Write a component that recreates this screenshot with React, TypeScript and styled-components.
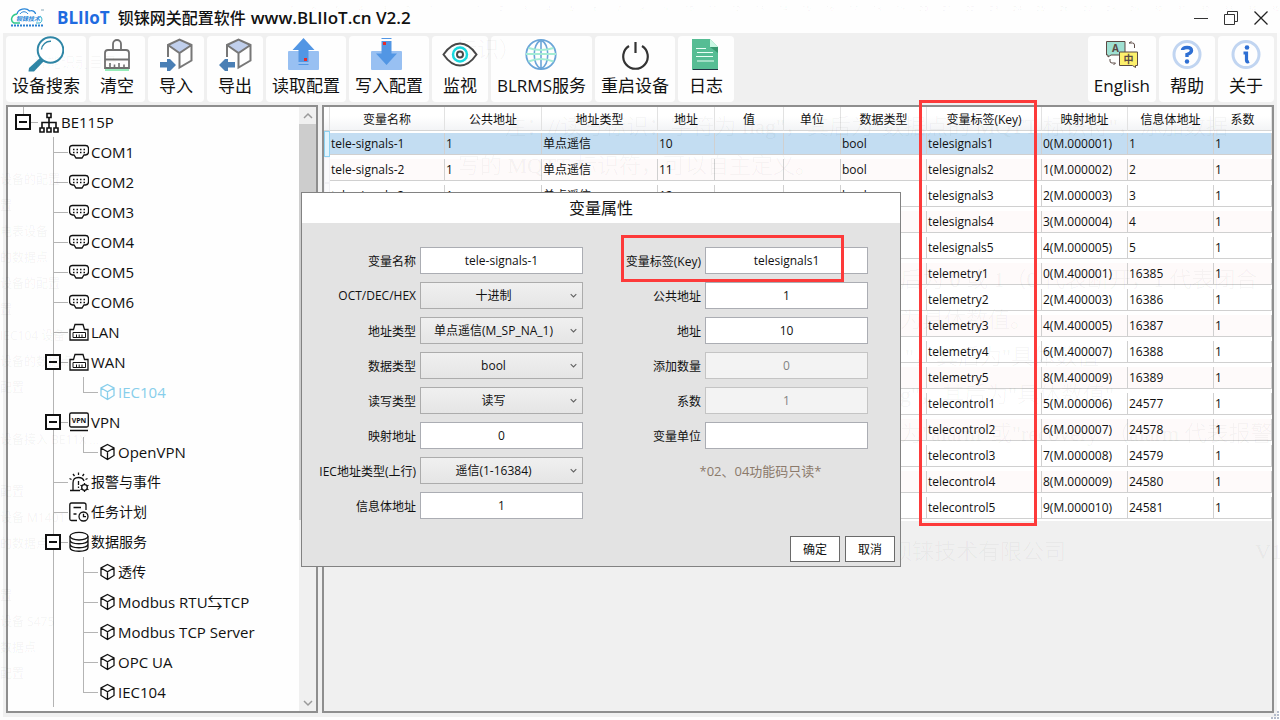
import React from "react";
import styled, { createGlobalStyle, css } from "styled-components";

const GlobalStyle = createGlobalStyle`
  *, *::before, *::after { box-sizing: border-box; }
  html, body { margin: 0; padding: 0; }
  body {
    background: #fdfdfd;
    color: #111;
    font-family: "Open Sans", "Noto Sans CJK SC", sans-serif;
    font-size: 12px;
  }
  button, input, select { font: inherit; color: inherit; margin: 0; }
  svg { display: block; flex: none; }
`;

/* ---------- window frame ---------- */

const Window = styled.div`
  position: relative;
  display: flex;
  flex-direction: column;
  height: 100vh;
  min-height: 600px;
  overflow: hidden;
`;

const TitleBar = styled.header`
  display: flex;
  align-items: center;
  height: 33px;
  flex: none;
  padding: 3px 11px 0 10px;
  background: #fefefe;
`;

const AppTitle = styled.h1`
  flex: 1;
  display: flex;
  align-items: center;
  gap: 8px;
  margin: 0 0 0 11px;
  font-size: 16px;
  line-height: 24px;
  font-weight: 500;
  color: #111;
  white-space: nowrap;
`;

const Brand = styled.span`
  color: #1f6be0;
  font-size: 17px;
  font-weight: 700;
`;

const Product = styled.span`
  display: flex;
  align-items: center;
  gap: 5px;
`;

const Version = styled.span`
  font-size: 17px;
  font-weight: 600;
`;

const WindowButtons = styled.div`
  display: flex;
  gap: 14px;
`;

const WindowButton = styled.button`
  width: 16px;
  height: 16px;
  padding: 0;
  border: 0;
  background: none;
`;

const Client = styled.div`
  flex: 1;
  min-height: 0;
  display: flex;
  flex-direction: column;
  gap: 3px;
  margin: 0 3px 3px;
  padding: 3px 3px 4px;
  background: #f0f0f0;
`;

/* ---------- toolbar ---------- */

const Toolbar = styled.nav`
  display: flex;
  gap: 3px;
  height: 66px;
  flex: none;
`;

const ToolSpacer = styled.div`
  flex: 1;
`;

const ToolButton = styled.button`
  display: flex;
  flex-direction: column;
  align-items: center;
  min-width: 56px;
  padding: 0 6px;
  border: 0;
  border-radius: 4px;
  background: #fefefe;
  font-size: 17px;
  line-height: 28px;
  white-space: nowrap;
`;

/* ---------- panels ---------- */

const Workspace = styled.main`
  flex: 1;
  min-height: 0;
  display: flex;
  gap: 4px;
`;

const TreePanel = styled.aside`
  width: 312px;
  flex: none;
  display: flex;
  overflow: hidden;
  border: 2px solid #8e8e8e;
  background: #fefefe;
`;

const TreeList = styled.ul`
  flex: 1;
  margin: 0;
  padding: 0;
  list-style: none;
`;

const TreeRow = styled.li<{ $active?: boolean; $latin?: boolean }>`
  display: flex;
  align-items: center;
  height: 30px;
  color: ${(p) => (p.$active ? "#87ceeb" : "#111")};
  font-size: ${(p) => (p.$latin ? 15 : 14)}px;
  line-height: 20px;
  white-space: nowrap;
`;

type Guide = "none" | "pass" | "tee" | "end" | "root" | "box";

const line = "#b4b4b4";

const guideLines = {
  none: css``,
  pass: css`
    background: linear-gradient(${line}, ${line}) 15px 0 / 1px 100% no-repeat;
  `,
  tee: css`
    background:
      linear-gradient(${line}, ${line}) 15px 0 / 1px 100% no-repeat,
      linear-gradient(${line}, ${line}) 15px 15px / 15px 1px no-repeat;
  `,
  box: css`
    background:
      linear-gradient(${line}, ${line}) 15px 0 / 1px 100% no-repeat,
      linear-gradient(${line}, ${line}) 15px 15px / 15px 1px no-repeat;
  `,
  end: css`
    background:
      linear-gradient(${line}, ${line}) 15px 0 / 1px 15px no-repeat,
      linear-gradient(${line}, ${line}) 15px 15px / 15px 1px no-repeat;
  `,
  root: css`
    background:
      linear-gradient(${line}, ${line}) 15px 0 / 1px 15px no-repeat,
      linear-gradient(${line}, ${line}) 15px 15px / 15px 1px no-repeat;
  `,
};

const GuideCell = styled.span<{ $kind: Guide }>`
  display: flex;
  align-items: center;
  justify-content: center;
  width: 30px;
  height: 30px;
  flex: none;
  ${(p) => guideLines[p.$kind]}
`;

const Expander = styled.button`
  display: grid;
  place-items: center;
  width: 16px;
  height: 16px;
  padding: 0;
  border: 2px solid #111;
  background: #fff;
  &::before {
    content: "";
    width: 8px;
    height: 2px;
    background: #111;
  }
`;

const NodeIcon = styled.span`
  margin: 0 2px 0 1px;
`;

const ScrollTrack = styled.div`
  display: flex;
  flex-direction: column;
  width: 17px;
  flex: none;
  background: #f0f0f0;
`;

const ScrollArrow = styled.button`
  display: grid;
  place-items: center;
  height: 17px;
  padding: 0;
  border: 0;
  background: #f0f0f0;
  color: #9a9a9a;
`;

const ScrollThumb = styled.div`
  flex: 396;
  background: #cdcdcd;
`;

const ScrollRest = styled.div`
  flex: 174;
`;

const GridPanel = styled.section`
  flex: 1;
  min-width: 0;
  overflow: hidden;
  border: 2px solid #8e8e8e;
  background: #f0f0f0;
`;

/* ---------- data table ---------- */

const Table = styled.table`
  width: 100%;
  table-layout: fixed;
  border-collapse: separate;
  border-spacing: 0;
  background: #fff;
`;

const HeadCell = styled.th`
  height: 24px;
  padding: 2px 0 0;
  border-right: 1px solid #e2e2e2;
  border-bottom: 1px solid #d5d5d5;
  background: linear-gradient(#fff 40%, #f3f4f6);
  font-weight: 400;
  line-height: 21px;
  white-space: nowrap;
`;

const Cell = styled.td`
  height: 26px;
  padding: 2px 0;
`;

const CellBox = styled.div<{ $tone: "selected" | "odd" | "even" }>`
  height: 22px;
  padding-left: 1px;
  overflow: hidden;
  border-right: 1px solid #d0d0d0;
  border-bottom: 1px solid #d0d0d0;
  background: ${(p) =>
    p.$tone === "selected" ? "#c3ddf2" : p.$tone === "even" ? "#fefafa" : "#fff"};
  line-height: 21px;
  white-space: nowrap;
`;

const RowMark = styled.td<{ $selected?: boolean }>`
  padding: 0;
  border: 1px solid ${(p) => (p.$selected ? "#8fd3f2" : "#f0f0f4")};
  background: ${(p) => (p.$selected ? "#e2f4fd" : "#fafafc")};
`;

/* ---------- dialog ---------- */

const Dialog = styled.section`
  position: absolute;
  left: 301px;
  top: 192px;
  width: 600px;
  border: 1px solid #828282;
  background: #e3e3e3;
`;

const DialogTitle = styled.h2`
  margin: 0;
  height: 30px;
  background: #fff;
  font-size: 16px;
  line-height: 30px;
  font-weight: 400;
  text-align: center;
`;

const Form = styled.form`
  display: flex;
  flex-direction: column;
  gap: 17px;
  padding: 24px 5px 4px 0;
`;

const FieldGrid = styled.div`
  display: grid;
  grid-template-columns: 114px 163px 114px 163px;
  grid-auto-rows: 27px;
  gap: 8px 4px;
  align-items: center;
`;

const Label = styled.label`
  text-align: right;
  white-space: nowrap;
`;

const TextField = styled.input`
  width: 100%;
  height: 27px;
  padding: 0 4px;
  border: 1px solid #abadb3;
  border-radius: 0;
  background: #fff;
  text-align: center;
  &:disabled {
    border-color: #c4c4c4;
    background: #f3f3f3;
    color: #838383;
  }
`;

const SelectBox = styled.span`
  display: grid;
  grid-template-columns: 1fr 20px;
  align-items: center;
  justify-items: center;
  > * { grid-row: 1; }
  > svg { grid-column: 2; pointer-events: none; z-index: 1; color: #606060; }
`;

const Select = styled.select`
  grid-column: 1 / 3;
  width: 100%;
  height: 27px;
  padding: 0 20px 0 4px;
  border: 1px solid #acacac;
  border-radius: 0;
  appearance: none;
  background: linear-gradient(#f0f0f0, #e5e5e5);
  text-align: center;
  text-align-last: center;
`;

const Note = styled.p`
  grid-column: 3 / 5;
  margin: 0 0 0 66px;
  color: #8b7a6b;
  font-size: 13px;
  text-align: center;
`;

const DialogActions = styled.div`
  display: flex;
  justify-content: flex-end;
  gap: 5px;
`;

const DialogButton = styled.button`
  width: 50px;
  height: 26px;
  padding: 0;
  border: 1px solid #6a6a6a;
  background: #fff;
`;

/* ---------- overlays ---------- */

const Highlight = styled.div<{ $x: number; $y: number; $w: number; $h: number }>`
  position: absolute;
  left: ${(p) => p.$x}px;
  top: ${(p) => p.$y}px;
  width: ${(p) => p.$w}px;
  height: ${(p) => p.$h}px;
  border: 3px solid #fd3a3a;
  pointer-events: none;
`;

const GhostLayer = styled.div`
  position: absolute;
  inset: 0;
  overflow: hidden;
  pointer-events: none;
  color: rgba(0, 0, 0, 0.05);
  white-space: nowrap;
`;

const GhostRuler = styled.div`
  position: absolute;
  left: 279px;
  top: 0;
  width: 1008px;
  display: grid;
  grid-template-columns: repeat(43, 1fr);
  font-size: 8px;
  line-height: 15px;
  text-align: center;
`;

const GhostOutline = styled.div`
  position: absolute;
  left: 0;
  top: 167px;
  line-height: 26px;
`;

const GhostRow = styled.div`
  height: 26px;
`;

const GhostText = styled.div<{ $x: number; $y: number; $size?: number }>`
  position: absolute;
  left: ${(p) => p.$x}px;
  top: ${(p) => p.$y}px;
  font-family: "Liberation Serif", "Noto Sans CJK SC", serif;
  font-size: ${(p) => p.$size ?? 22}px;
  font-weight: 300;
  line-height: 28px;
`;

const Grip = styled.svg`
  position: absolute;
  right: 0;
  bottom: 0;
`;

/* ---------- icons ---------- */

const ToolSvg = ({ children }: { children: React.ReactNode }) => (
  <svg width="36" height="36" viewBox="0 0 36 36" fill="none" aria-hidden="true">
    {children}
  </svg>
);

const SearchIcon = () => (
  <ToolSvg>
    <path d="M12.5 21.5 L16 25 L6 35.5 L0.5 35.5 L1 32 Z" fill="#2f86a6" />
    <circle cx="22.5" cy="14" r="12.8" fill="#fff" stroke="#2f86a6" strokeWidth="2" />
    <path d="M13.5 13.5 A9 9 0 0 1 23 5.2" stroke="#2f86a6" strokeWidth="1.4" />
  </ToolSvg>
);

const ClearIcon = () => (
  <ToolSvg>
    <path d="M14 14 V8 a4 4 0 0 1 8 0 V14" stroke="#707070" strokeWidth="1.8" />
    <path d="M6 32 V17 a3 3 0 0 1 3-3 H27 a3 3 0 0 1 3 3 V32 Z M6 23.500 H30" stroke="#707070" strokeWidth="1.8" />
    <path d="M11 27 V32 M15.500 28.500 V32 M20 27 V32 M25 28.500 V32" stroke="#707070" strokeWidth="1.6" />
    <path d="M6 34 H30" stroke="#4fe08a" strokeWidth="1.2" />
  </ToolSvg>
);

const Cube = () => (
  <>
    <path d="M21.500 3.500 L33.500 9 L21.500 17 L10 9 Z" fill="#c0cfec" />
    <path d="M10 21 V9 L21.500 3.500 L33.500 9 V24.500 L21.500 31.500 V17 M10 9 L21.500 17 L33.500 9" stroke="#777" strokeWidth="2" />
  </>
);

const ImportIcon = () => (
  <ToolSvg>
    <Cube />
    <path d="M2 26 H9 V23 H12 L18 29 L12 35 H9 V31.500 H2 Z" fill="#4a7fb5" />
  </ToolSvg>
);

const ExportIcon = () => (
  <ToolSvg>
    <Cube />
    <path d="M18 26 H11 V23 H8 L2 29 L8 35 H11 V31.500 H18 Z" fill="#4a7fb5" />
  </ToolSvg>
);

const ReadIcon = () => (
  <ToolSvg>
    <rect x="0" y="15" width="31" height="19" rx="1" fill="#98c0f2" />
    <path d="M15.500 2 L26.500 14 H20.500 V26 H10.500 V14 H4.500 Z" fill="#5296e4" />
    <path d="M10.500 28.500 H20.500" stroke="#5296e4" />
    <rect x="16" y="22" width="3" height="3" fill="#e52b2b" />
  </ToolSvg>
);

const WriteIcon = () => (
  <ToolSvg>
    <rect x="0" y="15" width="31" height="19" rx="1" fill="#98c0f2" />
    <path d="M10.500 5 H20.500 V17.500 H26 L15.500 29 L5 17.500 H10.500 Z" fill="#5296e4" />
    <path d="M10.500 2.500 H20.500" stroke="#5296e4" />
    <rect x="12" y="6" width="3" height="3" fill="#e52b2b" />
  </ToolSvg>
);

const EyeIcon = () => (
  <ToolSvg>
    <path d="M1.500 18.500 Q9 7.500 18 7.500 T34.500 18.500 Q27 29.500 18 29.500 T1.500 18.500 Z" stroke="#484848" strokeWidth="2" />
    <circle cx="18" cy="18.500" r="7" stroke="#19d9df" strokeWidth="2.500" />
    <circle cx="18" cy="18.500" r="3" stroke="#484848" strokeWidth="2" />
  </ToolSvg>
);

const GlobeIcon = () => (
  <ToolSvg>
    <circle cx="18" cy="18.500" r="14.700" stroke="#6ba5d8" strokeWidth="1.800" />
    <path d="M18 4 V33 M18 4 C9 9 9 28 18 33 M18 4 C27 9 27 28 18 33" stroke="#6ba5d8" strokeWidth="1.600" />
    <path d="M5.500 12 Q18 16 30.500 12 M3 18 H33 M5.500 25.500 Q18 20.500 30.500 25.500" stroke="#a4ecd4" strokeWidth="2.200" />
  </ToolSvg>
);

const PowerIcon = () => (
  <ToolSvg>
    <path d="M12 10 A12.300 12.300 0 1 0 25 10 M18.500 6 V17" stroke="#333" strokeWidth="2.200" />
  </ToolSvg>
);

const LogIcon = () => (
  <ToolSvg>
    <path d="M4 3 H22 L30 11 V34 H4 Z" fill="#56bd94" />
    <path d="M22 3 L30 11 H22 Z" fill="#c9f7e3" />
    <path d="M22 11 H30 V17 Z" fill="#36986f" />
    <path d="M8 12.500 H18 M9 16.500 H25 M8 20.500 H25 M9 25 H26" stroke="#eafff6" strokeWidth="1.200" />
    <path d="M5 33.500 H30" stroke="#234" />
  </ToolSvg>
);

const LanguageIcon = () => (
  <ToolSvg>
    <path d="M2.500 5.500 H21 V19 H7 L4 21 V19 H2.500 Z" fill="#9fe0d2" stroke="#5b4a45" />
    <path d="M15.500 16 H33.500 V29.500 H31.500 V31.500 L28.500 29.500 H15.500 Z" fill="#fdf06c" stroke="#5b4a45" />
    <path d="M25 7 H28.500 a2 2 0 0 1 2 2 V12 M25 7 L27.500 5.500 M6 23 V25 a2 2 0 0 0 2 2 H11.500 L9.500 29" stroke="#5b4a45" />
    <text x="11.500" y="16" textAnchor="middle" fontSize="10" fontWeight="700" fill="#5b4a45">A</text>
    <text x="24.500" y="26.500" textAnchor="middle" fontSize="10" fontWeight="700" fill="#5b4a45">中</text>
  </ToolSvg>
);

const HelpIcon = () => (
  <ToolSvg>
    <circle cx="18" cy="18.500" r="13" stroke="#c1d5f1" strokeWidth="3" />
    <path d="M13.500 14 Q13.500 11.500 18 11.500 Q22.500 11.500 22.500 14.500 Q22.500 17 18 18.500 V21" stroke="#2e6fd3" strokeWidth="3.400" />
    <circle cx="18" cy="25.500" r="2.200" fill="#2e6fd3" />
  </ToolSvg>
);

const AboutIcon = () => (
  <ToolSvg>
    <circle cx="18" cy="18.500" r="13" stroke="#c1d5f1" strokeWidth="3" />
    <circle cx="19" cy="11.500" r="2.300" fill="#2e6fd3" />
    <path d="M15.500 17 H18.500 V24.500 Q18.500 26.500 21 25.500" stroke="#2e6fd3" strokeWidth="3.200" />
  </ToolSvg>
);

const NodeSvg = ({ w = 20, children }: { w?: number; children: React.ReactNode }) => (
  <svg
    width={w}
    height="22"
    viewBox={`0 0 ${w} 22`}
    fill="none"
    stroke="currentColor"
    strokeWidth="1.300"
    aria-hidden="true"
  >
    {children}
  </svg>
);

const nodeIcons = {
  site: (
    <NodeSvg>
      <g strokeWidth="1.600">
        <path d="M8 2.500 h4 v4 h-4 Z M1 17 h4 v4 h-4 Z M8 17 h4 v4 h-4 Z M15 17 h4 v4 h-4 Z M10 6.500 V17 M3 17 V11.500 H17 V17" />
      </g>
    </NodeSvg>
  ),
  com: (
    <NodeSvg>
      <path d="M3.500 4.500 H16.500 Q19.500 4.500 19.500 7.500 V11 Q19.500 13.500 16.500 14 H15 L13 17 H7 L5 14 H3.500 Q0.600 13.500 0.600 11 V7.500 Q0.600 4.500 3.500 4.500 Z" />
      <path d="M4 8.500 H17 M4 11.500 H17" strokeWidth="1.500" strokeDasharray="1.500 2" />
    </NodeSvg>
  ),
  lan: (
    <NodeSvg>
      <path d="M1 19 V8.500 H4.500 L6 3.500 H14 L15.500 8.500 H19 V19 Z" />
      <path d="M4 16.500 V11.500 H16.500 V16.500 Z M7.500 13.500 V16.500 M10.200 13.500 V16.500 M13 13.500 V16.500" strokeWidth="1" />
    </NodeSvg>
  ),
  vpn: (
    <NodeSvg>
      <rect x="0.700" y="2" width="18.600" height="14" rx="1.500" />
      <path d="M1 19.500 H19" strokeWidth="1.500" />
      <text x="10" y="11.500" textAnchor="middle" fontSize="7" fontWeight="700" fill="currentColor" stroke="none">VPN</text>
    </NodeSvg>
  ),
  alarm: (
    <NodeSvg>
      <path d="M4 19 V12 Q4 6.500 9.500 6.500 Q14 6.500 15 10 M1 19.500 H11 M9.500 10 V14 M9.500 15.500 V17 M9.500 1.500 V4 M4 3 L5.500 5 M15 3 L13.500 5 M0.500 7.500 L2.500 8.500 M18.500 7.500 L16.500 8.500" />
      <circle cx="15.500" cy="16.500" r="2.800" />
      <path d="M15.500 12 V13.500 M15.500 19.500 V21 M11.500 14.200 L13 15 M18 18 L19.500 18.800 M19.500 14.200 L18 15 M11.500 18.800 L13 18" />
    </NodeSvg>
  ),
  task: (
    <NodeSvg>
      <path d="M17 9 V4 Q17 2 15 2 H2.500 Q0.800 2 0.800 4 V18 Q0.800 19.500 2.500 19.500 H8 M4.500 6.500 H12 M4.500 13 H7.500" />
      <circle cx="14.500" cy="15.500" r="4.500" />
      <path d="M14.500 12.800 V15.700 H17" />
    </NodeSvg>
  ),
  data: (
    <NodeSvg>
      <ellipse cx="10" cy="5.200" rx="9" ry="3.800" />
      <path d="M1 5.200 V16.500 C1 21.500 19 21.500 19 16.500 V5.200 M1 9 C1 14 19 14 19 9 M1 13 C1 18 19 18 19 13" />
    </NodeSvg>
  ),
  cube: (
    <NodeSvg w={17}>
      <path d="M8.500 3.500 L15 7 V14.500 L8.500 18.500 L2 14.500 V7 Z M2 7 L8.500 10.800 L15 7 M8.500 10.800 V18.500" />
    </NodeSvg>
  ),
};

const Logo = () => (
  <svg width="36" height="20" viewBox="0 0 36 20" fill="none" aria-hidden="true">
    <path d="M7 6 C8 1 16 -1 19.500 3 C23 2 25.500 4 25.500 6" stroke="#2a86d8" strokeWidth="1.300" />
    <path d="M10 6 C12 3 16 3 18 6" stroke="#2a86d8" />
    <path d="M7 6 C1 7 0 13 4 15 H10" stroke="#2fc88c" strokeWidth="1.500" />
    <path d="M26 15 H30 C33 13 32 9 30 8" stroke="#2fb0c8" strokeWidth="1" />
    <text x="6" y="12.500" fontSize="6" fontStyle="italic" fontWeight="700" fill="#2a86d8">钡铼技术</text>
    <path d="M1 17.500 H33" stroke="#2a7fd0" strokeWidth="1.800" strokeDasharray="2 1" />
    <path d="M31 2 H34" stroke="#8ab" />
  </svg>
);

const Chevron = ({ up, size = 10 }: { up?: boolean; size?: number }) => (
  <svg width={size} height={size} viewBox="0 0 10 10" fill="none" stroke="currentColor" strokeWidth="1.500" aria-hidden="true">
    <path d={up ? "M1 7 L5 3 L9 7" : "M1 3 L5 7 L9 3"} />
  </svg>
);

/* ---------- data ---------- */

const mainTools = [
  { label: "设备搜索", icon: <SearchIcon /> },
  { label: "清空", icon: <ClearIcon /> },
  { label: "导入", icon: <ImportIcon /> },
  { label: "导出", icon: <ExportIcon /> },
  { label: "读取配置", icon: <ReadIcon /> },
  { label: "写入配置", icon: <WriteIcon /> },
  { label: "监视", icon: <EyeIcon /> },
  { label: "BLRMS服务", icon: <GlobeIcon /> },
  { label: "重启设备", icon: <PowerIcon /> },
  { label: "日志", icon: <LogIcon /> },
];

const sideTools = [
  { label: "English", icon: <LanguageIcon /> },
  { label: "帮助", icon: <HelpIcon /> },
  { label: "关于", icon: <AboutIcon /> },
];

type TreeNode = {
  label: string;
  icon: keyof typeof nodeIcons;
  guides: Guide[];
  active?: boolean;
};

const port = (label: string): TreeNode => ({ label, icon: "com", guides: ["none", "tee"] });
const service = (label: string, last?: boolean): TreeNode => ({
  label,
  icon: "cube",
  guides: ["none", "pass", last ? "end" : "tee"],
});

const tree: TreeNode[] = [
  { label: "BE115P", icon: "site", guides: ["root"] },
  port("COM1"),
  port("COM2"),
  port("COM3"),
  port("COM4"),
  port("COM5"),
  port("COM6"),
  { label: "LAN", icon: "lan", guides: ["none", "tee"] },
  { label: "WAN", icon: "lan", guides: ["none", "box"] },
  { ...service("IEC104", true), active: true },
  { label: "VPN", icon: "vpn", guides: ["none", "box"] },
  service("OpenVPN", true),
  { label: "报警与事件", icon: "alarm", guides: ["none", "tee"] },
  { label: "任务计划", icon: "task", guides: ["none", "tee"] },
  { label: "数据服务", icon: "data", guides: ["none", "box"] },
  service("透传"),
  service("Modbus RTU⇆TCP"),
  service("Modbus TCP Server"),
  service("OPC UA"),
  service("IEC104", true),
];

const isLatin = (text: string) => /^[A-Z]/.test(text);

const columns: { title: string; width?: number }[] = [
  { title: "变量名称", width: 115 },
  { title: "公共地址", width: 97 },
  { title: "地址类型", width: 116 },
  { title: "地址", width: 57 },
  { title: "值", width: 69 },
  { title: "单位", width: 57 },
  { title: "数据类型", width: 86 },
  { title: "变量标签(Key)", width: 115 },
  { title: "映射地址", width: 86 },
  { title: "信息体地址", width: 86 },
  { title: "系数" },
];

const signal = (n: number, mapped: string) => [
  `tele-signals-${n}`, "1", "单点遥信", String(9 + n), "", "", "bool", `telesignals${n}`, mapped, String(n), "1",
];
const metric = (n: number, mapped: string) => [
  `telemetry-${n}`, "1", "短浮点数", String(n), "", "", "float", `telemetry${n}`, mapped, String(16384 + n), "1",
];
const control = (n: number, mapped: string) => [
  `telecontrol-${n}`, "1", "单点遥控", String(n), "", "", "bool", `telecontrol${n}`, mapped, String(24576 + n), "1",
];

const rows = [
  signal(1, "0(M.000001)"),
  signal(2, "1(M.000002)"),
  signal(3, "2(M.000003)"),
  signal(4, "3(M.000004)"),
  signal(5, "4(M.000005)"),
  metric(1, "0(M.400001)"),
  metric(2, "2(M.400003)"),
  metric(3, "4(M.400005)"),
  metric(4, "6(M.400007)"),
  metric(5, "8(M.400009)"),
  control(1, "5(M.000006)"),
  control(2, "6(M.000007)"),
  control(3, "7(M.000008)"),
  control(4, "8(M.000009)"),
  control(5, "9(M.000010)"),
];

type Field = { id: string; label: string; value: string; kind?: "select" | "disabled" };

const formRows: [Field, Field?][] = [
  [{ id: "name", label: "变量名称", value: "tele-signals-1" }, { id: "key", label: "变量标签(Key)", value: "telesignals1" }],
  [{ id: "radix", label: "OCT/DEC/HEX", value: "十进制", kind: "select" }, { id: "common", label: "公共地址", value: "1" }],
  [{ id: "addrType", label: "地址类型", value: "单点遥信(M_SP_NA_1)", kind: "select" }, { id: "addr", label: "地址", value: "10" }],
  [{ id: "dataType", label: "数据类型", value: "bool", kind: "select" }, { id: "count", label: "添加数量", value: "0", kind: "disabled" }],
  [{ id: "access", label: "读写类型", value: "读写", kind: "select" }, { id: "factor", label: "系数", value: "1", kind: "disabled" }],
  [{ id: "mapped", label: "映射地址", value: "0" }, { id: "unit", label: "变量单位", value: "" }],
  [{ id: "iecType", label: "IEC地址类型(上行)", value: "遥信(1-16384)", kind: "select" }],
  [{ id: "info", label: "信息体地址", value: "1" }],
];

const rulerMarks = [
  ...[7, 6, 5, 4, 3, 2, 1].map(String),
  "",
  ...Array.from({ length: 35 }, (_, i) => String(i + 1)),
];

const outlineLines = [
  "设备的配置", "置", "电表设备", "的数据点", "设备的配置", "置", "IEC104 设备", "设备的数据点", "配置", "",
  "设备接入 BE11X ...", "", "配置", "设备 M1401", "的数据点", "", "置", "设备 S475", "数据点", "配置",
];

/* ---------- parts ---------- */

const FieldPair = ({ field }: { field: Field }) => (
  <>
    <Label htmlFor={field.id}>{field.label}</Label>
    {field.kind === "select" ? (
      <SelectBox>
        <Select id={field.id} defaultValue={field.value}>
          <option>{field.value}</option>
        </Select>
        <Chevron size={7} />
      </SelectBox>
    ) : (
      <TextField id={field.id} defaultValue={field.value} disabled={field.kind === "disabled"} />
    )}
  </>
);

const Tool = ({ label, icon }: { label: string; icon: React.ReactNode }) => (
  <ToolButton type="button">
    {icon}
    {label}
  </ToolButton>
);

const DeviceTree = () => (
  <TreePanel>
    <TreeList>
      {tree.map((node, i) => (
        <TreeRow key={i} $active={node.active} $latin={isLatin(node.label)}>
          {node.guides.map((kind, j) => (
            <GuideCell key={j} $kind={kind}>
              {(kind === "box" || kind === "root") && (
                <Expander type="button" aria-label={`折叠 ${node.label}`} aria-expanded="true" />
              )}
            </GuideCell>
          ))}
          <NodeIcon>{nodeIcons[node.icon]}</NodeIcon>
          {node.label}
        </TreeRow>
      ))}
    </TreeList>
    <ScrollTrack>
      <ScrollArrow type="button" aria-label="向上滚动"><Chevron up /></ScrollArrow>
      <ScrollThumb />
      <ScrollRest />
      <ScrollArrow type="button" aria-label="向下滚动"><Chevron /></ScrollArrow>
    </ScrollTrack>
  </TreePanel>
);

const PointTable = () => (
  <GridPanel>
    <Table>
      <colgroup>
        <col style={{ width: 6 }} />
        {columns.map((c) => (
          <col key={c.title} style={{ width: c.width }} />
        ))}
      </colgroup>
      <thead>
        <tr>
          <HeadCell aria-hidden="true" />
          {columns.map((c) => (
            <HeadCell key={c.title} scope="col">{c.title}</HeadCell>
          ))}
        </tr>
      </thead>
      <tbody>
        {rows.map((row, i) => (
          <tr key={row[0]}>
            <RowMark $selected={i === 0} />
            {row.map((value, j) => (
              <Cell key={j}>
                <CellBox $tone={i === 0 ? "selected" : i % 2 ? "even" : "odd"}>{value}</CellBox>
              </Cell>
            ))}
          </tr>
        ))}
      </tbody>
    </Table>
  </GridPanel>
);

const PropertyDialog = () => (
  <Dialog role="dialog" aria-labelledby="dialog-title">
    <DialogTitle id="dialog-title">变量属性</DialogTitle>
    <Form onSubmit={(e) => e.preventDefault()}>
      <FieldGrid>
        {formRows.map(([left, right]) => (
          <React.Fragment key={left.id}>
            <FieldPair field={left} />
            {right && <FieldPair field={right} />}
            {left.id === "iecType" && <Note>*02、04功能码只读*</Note>}
          </React.Fragment>
        ))}
      </FieldGrid>
      <DialogActions>
        <DialogButton type="submit">确定</DialogButton>
        <DialogButton type="button">取消</DialogButton>
      </DialogActions>
    </Form>
  </Dialog>
);

const Ghosts = () => (
  <GhostLayer aria-hidden="true">
    <GhostRuler>
      {rulerMarks.map((m, i) => (
        <span key={i}>{m}</span>
      ))}
    </GhostRuler>
    <GhostOutline>
      {outlineLines.map((t, i) => (
        <GhostRow key={i}>{t}</GhostRow>
      ))}
    </GhostOutline>
    <GhostText $x={455} $y={36}>标识）</GhostText>
    <GhostText $x={33} $y={49} $size={14}>智能识别目录</GhostText>
    <GhostText $x={504} $y={113}>注：//读写标识：字符为 flag"，其后为"数据点的 MQTT 标识符"，添加数据</GhostText>
    <GhostText $x={458} $y={152}>写的 MQTT 标识符，可以自主定义。</GhostText>
    <GhostText $x={900} $y={266}>后为 0 或 1（0 代表断开，1 代表闭合</GhostText>
    <GhostText $x={900} $y={306}>为具体数值。</GhostText>
    <GhostText $x={905} $y={343}>"，其后为"具体数值"</GhostText>
    <GhostText $x={900} $y={381}>g"，其后为"具体数值"</GhostText>
    <GhostText $x={900} $y={420}>为"alarm"或"recovery"（alarm 代表报警</GhostText>
    <GhostText $x={890} $y={538}>钡铼技术有限公司</GhostText>
    <GhostText $x={1255} $y={538}>V1</GhostText>
  </GhostLayer>
);

export default function App() {
  return (
    <>
      <GlobalStyle />
      <Window>
        <TitleBar>
          <Logo />
          <AppTitle>
            <Brand>BLIIoT</Brand>
            <Product>
              钡铼网关配置软件
              <Version>www.BLIIoT.cn V2.2</Version>
            </Product>
          </AppTitle>
          <WindowButtons>
            <WindowButton type="button" aria-label="最小化">
              <svg width="16" height="16" stroke="#333" fill="none"><path d="M1 8.500 H15" /></svg>
            </WindowButton>
            <WindowButton type="button" aria-label="还原">
              <svg width="16" height="16" stroke="#333" fill="none"><path d="M1.500 4.500 H11.500 V14.500 H1.500 Z M4.500 4.500 V1.500 H14.500 V11.500 H11.500" /></svg>
            </WindowButton>
            <WindowButton type="button" aria-label="关闭">
              <svg width="16" height="16" stroke="#222" strokeWidth="1.300" fill="none"><path d="M1.500 1.500 L14.500 14.500 M14.500 1.500 L1.500 14.500" /></svg>
            </WindowButton>
          </WindowButtons>
        </TitleBar>
        <Client>
          <Toolbar>
            {mainTools.map((t) => (
              <Tool key={t.label} {...t} />
            ))}
            <ToolSpacer />
            {sideTools.map((t) => (
              <Tool key={t.label} {...t} />
            ))}
          </Toolbar>
          <Workspace>
            <DeviceTree />
            <PointTable />
          </Workspace>
        </Client>
        <Ghosts />
        <PropertyDialog />
        <Highlight $x={919} $y={100} $w={118} $h={426} />
        <Highlight $x={621} $y={235} $w={223} $h={47} />
        <Grip width="10" height="10" fill="#b4bccb" aria-hidden="true">
          <path d="M7 1h2v2h-2Z M7 4h2v2h-2Z M4 4h2v2h-2Z M7 7h2v2h-2Z M4 7h2v2h-2Z M1 7h2v2h-2Z" />
        </Grip>
      </Window>
    </>
  );
}
